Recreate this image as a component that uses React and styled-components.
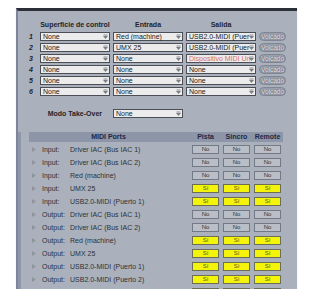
import styled, { createGlobalStyle } from "styled-components";

const GlobalStyle = createGlobalStyle`
  html, body {
    margin: 0;
    background: #fff;
  }
  body {
    font-family: "Liberation Sans", Arial, sans-serif;
  }
`;

const Window = styled.div`
  margin: 8px 0 0 16px;
  width: 281px;
  height: 281px;
  box-sizing: border-box;
  background: #aab1bc;
  border-top: 3px solid #2b2f38;
  border-left: 2px solid #7d8698;
  overflow: hidden;
  box-shadow: 0 1px 2px rgba(0, 0, 0, 0.08);
`;

const Surfaces = styled.div`
  display: grid;
  grid-template-columns: 19px 70px 70px 70px 27px;
  column-gap: 3px;
  row-gap: 2px;
  align-items: center;
  padding-top: 9px;
`;

const ColHead = styled.div`
  font-size: 7px;
  font-weight: bold;
  line-height: 9px;
  color: #1f232b;
  text-align: center;
  margin-bottom: 1px;
`;

const Num = styled.div`
  font-size: 7px;
  font-weight: bold;
  font-style: italic;
  color: #1f232b;
  text-align: right;
  padding-right: 4px;
  line-height: 9px;
`;

const SelectBox = styled.div`
  position: relative;
  height: 9px;
  box-sizing: border-box;
  background: #ececec;
  border: 1px solid #4b4e55;
  font-size: 7px;
  line-height: 7px;
  padding: 0 7px 0 2px;
  color: ${(p) => (p.$alert ? "#d8716c" : "#222")};
  white-space: nowrap;
`;

const Arrow = styled.svg`
  position: absolute;
  right: 1px;
  top: 1px;
`;

const Dropdown = ({ value, alert }) => (
  <SelectBox $alert={alert}>
    {value}
    <Arrow width="5" height="5" viewBox="0 0 5 5">
      <rect x="0.5" y="0.5" width="4" height="1" fill="#8a8d93" />
      <polygon points="0,2 5,2 2.5,5" fill="#7a7d83" />
    </Arrow>
  </SelectBox>
);

const Volcado = styled.div`
  height: 9px;
  box-sizing: border-box;
  border-radius: 5px;
  background: #9aa1ad;
  border: 1px solid #7f8692;
  font-size: 6.5px;
  line-height: 7px;
  text-align: center;
  color: #eef0f3;
  text-shadow: 0 0 1px #4f5560, 0 0 1px #4f5560;
`;

const TakeOver = styled.div`
  display: grid;
  grid-template-columns: 19px 70px 70px;
  column-gap: 3px;
  align-items: center;
  margin-top: 13px;
`;

const TakeOverLabel = styled.div`
  grid-column: 1 / 3;
  text-align: right;
  padding-right: 8px;
  font-size: 7px;
  font-weight: bold;
  color: #1f232b;
`;

const Ports = styled.div`
  margin-top: 14px;
  padding-left: 11px;
  box-shadow: inset 3px 0 0 #8e97a9;
`;

const PortGrid = styled.div`
  display: grid;
  grid-template-columns: 159px 27px 27px 27px;
  column-gap: 4px;
  align-items: center;
`;

const PortHead = styled(PortGrid)`
  width: 254px;
  height: 10px;
  background: #8d96a9;
  margin-bottom: 1px;
`;

const PortHeadCell = styled.div`
  font-size: 7px;
  font-weight: bold;
  color: #1c2747;
  text-align: center;
  line-height: 10px;
`;

const PortRow = styled(PortGrid)`
  height: 13px;
`;

const PortName = styled.div`
  display: flex;
  align-items: center;
  padding-left: 3px;
  font-size: 7px;
  color: #2c313a;
  white-space: nowrap;
`;

const Kind = styled.span`
  width: 28px;
  margin-left: 6px;
`;

const Toggle = styled.div`
  height: 9px;
  box-sizing: border-box;
  border: 1px solid ${(p) => (p.$on ? "#6d6f52" : "#737a86")};
  background: ${(p) => (p.$on ? "#f3f30c" : "#b9bec7")};
  color: ${(p) => (p.$on ? "#5d5d24" : "#2d323b")};
  font-size: 6px;
  line-height: 7px;
  text-align: center;
`;

const surfaces = [
  ["None", "Red (machine)", "USB2.0-MIDI (Puer"],
  ["None", "UMX 25", "USB2.0-MIDI (Puer"],
  ["None", "None", "Dispositivo MIDI Un", true],
  ["None", "None", "None"],
  ["None", "None", "None"],
  ["None", "None", "None"],
];

const ports = [
  ["Input:", "Driver IAC (Bus IAC 1)", false],
  ["Input:", "Driver IAC (Bus IAC 2)", false],
  ["Input:", "Red (machine)", false],
  ["Input:", "UMX 25", true],
  ["Input:", "USB2.0-MIDI (Puerto 1)", true],
  ["Output:", "Driver IAC (Bus IAC 1)", false],
  ["Output:", "Driver IAC (Bus IAC 2)", false],
  ["Output:", "Red (machine)", true],
  ["Output:", "UMX 25", true],
  ["Output:", "USB2.0-MIDI (Puerto 1)", true],
  ["Output:", "USB2.0-MIDI (Puerto 2)", true],
  ["", "", true],
];

export default function App() {
  return (
    <>
      <GlobalStyle />
      <Window>
        <Surfaces>
          <div />
          <ColHead>Superficie de control</ColHead>
          <ColHead>Entrada</ColHead>
          <ColHead>Salida</ColHead>
          <div />
          {surfaces.map(([ctl, input, output, alert], i) => [
            <Num key={"n" + i}>{i + 1}</Num>,
            <Dropdown key={"c" + i} value={ctl} />,
            <Dropdown key={"i" + i} value={input} />,
            <Dropdown key={"o" + i} value={output} alert={alert} />,
            <Volcado key={"v" + i}>Volcado</Volcado>,
          ])}
        </Surfaces>
        <TakeOver>
          <TakeOverLabel>Modo Take-Over</TakeOverLabel>
          <Dropdown value="None" />
        </TakeOver>
        <Ports>
          <PortHead>
            <PortHeadCell>MIDI Ports</PortHeadCell>
            <PortHeadCell>Pista</PortHeadCell>
            <PortHeadCell>Sincro</PortHeadCell>
            <PortHeadCell>Remote</PortHeadCell>
          </PortHead>
          {ports.map(([kind, name, on], i) => (
            <PortRow key={i}>
              <PortName>
                {name && (
                  <svg width="4" height="5" viewBox="0 0 4 5">
                    <polygon points="0,0 4,2.5 0,5" fill="#8f949d" />
                  </svg>
                )}
                <Kind>{kind}</Kind>
                {name}
              </PortName>
              {[0, 1, 2].map((c) => (
                <Toggle key={c} $on={on}>
                  {name ? (on ? "Sí" : "No") : ""}
                </Toggle>
              ))}
            </PortRow>
          ))}
        </Ports>
      </Window>
    </>
  );
}
